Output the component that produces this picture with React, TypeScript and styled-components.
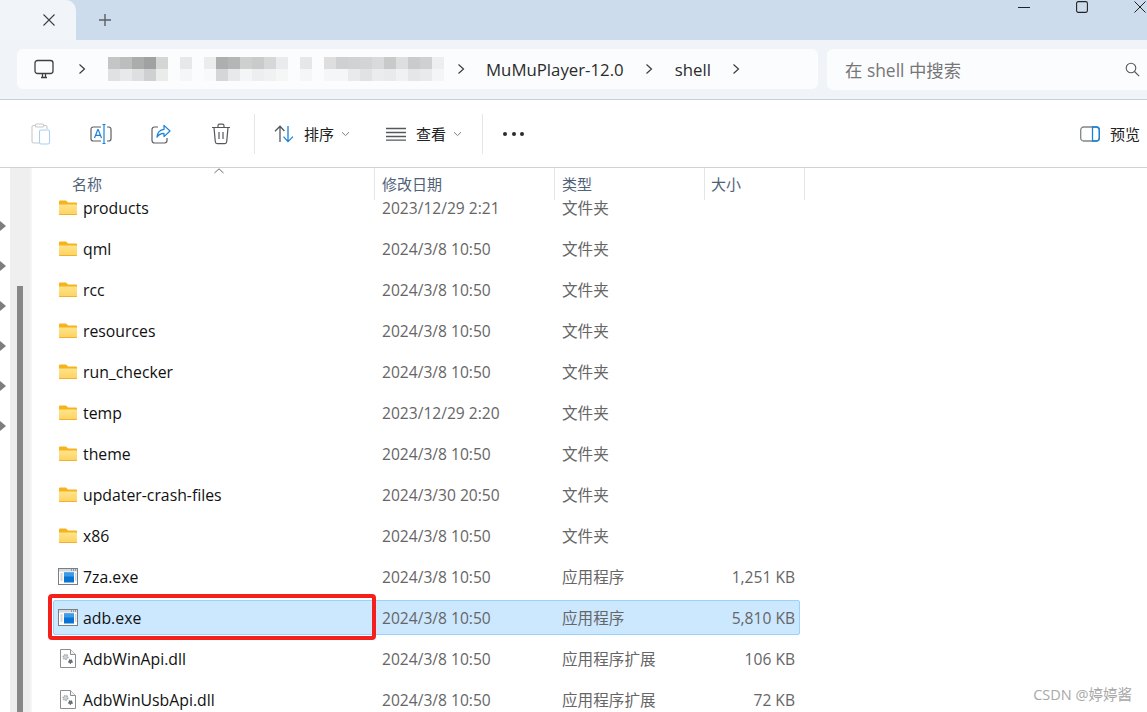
import React from 'react'
import styled, {createGlobalStyle} from 'styled-components'

const FONT = `"Open Sans", "Noto Sans CJK SC", sans-serif`

const GlobalStyle = createGlobalStyle`
  html, body {
    margin: 0;
    padding: 0;
    height: 712px;
    overflow: hidden;
    background: #fff;
    font-family: ${FONT};
  }
`

type FileKind = 'folder' | 'exe' | 'dll'

interface FileRow {
  name: string
  date: string
  type: string
  size?: string
  kind: FileKind
  selected?: boolean
}

const FILES: FileRow[] = [
  {name: 'products', date: '2023/12/29 2:21', type: '文件夹', kind: 'folder'},
  {name: 'qml', date: '2024/3/8 10:50', type: '文件夹', kind: 'folder'},
  {name: 'rcc', date: '2024/3/8 10:50', type: '文件夹', kind: 'folder'},
  {name: 'resources', date: '2024/3/8 10:50', type: '文件夹', kind: 'folder'},
  {name: 'run_checker', date: '2024/3/8 10:50', type: '文件夹', kind: 'folder'},
  {name: 'temp', date: '2023/12/29 2:20', type: '文件夹', kind: 'folder'},
  {name: 'theme', date: '2024/3/8 10:50', type: '文件夹', kind: 'folder'},
  {name: 'updater-crash-files', date: '2024/3/30 20:50', type: '文件夹', kind: 'folder'},
  {name: 'x86', date: '2024/3/8 10:50', type: '文件夹', kind: 'folder'},
  {name: '7za.exe', date: '2024/3/8 10:50', type: '应用程序', size: '1,251 KB', kind: 'exe'},
  {name: 'adb.exe', date: '2024/3/8 10:50', type: '应用程序', size: '5,810 KB', kind: 'exe', selected: true},
  {name: 'AdbWinApi.dll', date: '2024/3/8 10:50', type: '应用程序扩展', size: '106 KB', kind: 'dll'},
  {name: 'AdbWinUsbApi.dll', date: '2024/3/8 10:50', type: '应用程序扩展', size: '72 KB', kind: 'dll'},
]

// the blurred part of the path, two rows of 12px blocks ('' = nothing)
const MOSAIC = [
  ['#c4c5c6', '#bcbdbd', '#abacac', '#a0a1a1', '#d4d5d5', '', '#e7e8e9', '', '#ebecec', '#adaeae', '#b4b5b5', '#ccd0cf', '#c9cbcb', '#d5d7d8', '#e9ebec', '', '#e6e7e8', '', '#dededf', '#cfd0d1', '#d0d2d3', '#d2d5d7', '#d8dadb', '#c8c9c9', '#dcdedf', '#c9cbcc', '#cfd0d1', '#eceef0'],
  ['#e0e1e2', '#e8e9ea', '#dedfe0', '#cfd0d1', '#ebebe9', '', '#f5f6f7', '', '#f8f9fa', '#d5d6d6', '#e8e9ea', '#f4f5f6', '#edeef0', '#f0f2f2', '#f6f6f7', '', '#f5f6f7', '', '#f5f6f7', '#f5f6f7', '#e8eaec', '#e0e2e4', '#eaecee', '#e8eaec', '#f0f1f3', '#e5e6e8', '#e9eaec', '#f4f5f7'],
]

function FileIcon({kind}: {kind: FileKind}): React.JSX.Element {
  if (kind === 'folder') {
    return (
      <svg width='20' height='18' viewBox='0 0 20 18'>
        <defs>
          <linearGradient id='folderBody' x1='0' y1='0' x2='0' y2='1'>
            <stop offset='0' stopColor='#ffe48c' />
            <stop offset='1' stopColor='#fdd25f' />
          </linearGradient>
        </defs>
        <path d='M1 2.5a1 1 0 0 1 1-1h6l2 2h8a1 1 0 0 1 1 1V8H1z' fill='#f6b31c' />
        <path d='M1 5.5h17a1 1 0 0 1 1 1v8.5a1 1 0 0 1-1 1H2a1 1 0 0 1-1-1z' fill='url(#folderBody)' />
        <path d='M1 15h18v.2a.8.8 0 0 1-.8.8H1.8a.8.8 0 0 1-.8-.8z' fill='#f1b02e' />
      </svg>
    )
  }
  if (kind === 'exe') {
    return (
      <svg width='20' height='18' viewBox='0 0 20 18'>
        <rect x='.5' y='.5' width='19' height='16' fill='#fff' stroke='#7a7f84' />
        <rect x='1' y='1' width='18' height='2.5' fill='#d4d9de' />
        <path d='M13 2h1M15 2h1M17 2h1' stroke='#555' />
        <rect x='6' y='4.5' width='10' height='10' fill='#0a74d0' />
        <rect x='6' y='4.5' width='10' height='4' fill='#3b9be8' />
        <path d='M2.5 6h2M2.5 8h2M2.5 10h2M2.5 12h2M17 6h1.5M17 8h1.5M17 10h1.5M17 12h1.5' stroke='#a9b0b6' />
      </svg>
    )
  }
  return (
    <svg width='20' height='19' viewBox='0 0 20 19'>
      <path d='M2.5.5h10l5 5v13h-15z' fill='#fff' stroke='#8b8f93' />
      <path d='M12.5.5v5h5' fill='#f2f2f2' stroke='#8b8f93' />
      <circle cx='7.5' cy='8' r='2.4' fill='#cdd2d6' stroke='#a5abb0' strokeDasharray='1.4 .8' strokeWidth='1.4' />
      <circle cx='12.5' cy='12.5' r='1.7' fill='#6e7478' stroke='#5b6165' strokeDasharray='1.2 .7' strokeWidth='1.2' />
    </svg>
  )
}

function Chevron(): React.JSX.Element {
  return (
    <svg width='8' height='12' viewBox='0 0 8 12' fill='none' stroke='#3a3d40' strokeWidth='1.2'>
      <path d='M1.5 1.5 6.5 6l-5 4.5' />
    </svg>
  )
}

function SmallCaret(): React.JSX.Element {
  return (
    <svg width='9' height='6' viewBox='0 0 9 6' fill='none' stroke='#7c7f83' strokeWidth='1'>
      <path d='M1 1.2 4.5 4.6 8 1.2' />
    </svg>
  )
}

export default function App(): React.JSX.Element {
  return (
    <Window>
      <GlobalStyle />

      <TitleBar>
        <Tab>
          <svg width='14' height='14' viewBox='0 0 14 14' stroke='#3d4043' strokeWidth='1.1'>
            <path d='M1.5 1.5l11 11M12.5 1.5l-11 11' />
          </svg>
        </Tab>
        <NewTab>
          <svg width='14' height='14' viewBox='0 0 14 14' stroke='#5a5e62' strokeWidth='1.4'>
            <path d='M7 1v12M1 7h12' />
          </svg>
        </NewTab>
        <WindowControls>
          <WindowButton>
            <svg width='12' height='12' viewBox='0 0 12 12' stroke='#222' strokeWidth='1'>
              <path d='M0 6.5h12' />
            </svg>
          </WindowButton>
          <WindowButton>
            <svg width='12' height='12' viewBox='0 0 12 12' fill='none' stroke='#222' strokeWidth='1.1'>
              <rect x='.6' y='.6' width='10.8' height='10.8' rx='1.6' />
            </svg>
          </WindowButton>
          <WindowButton>
            <svg width='12' height='12' viewBox='0 0 12 12' stroke='#222' strokeWidth='1'>
              <path d='M.5.5l11 11M11.5.5l-11 11' />
            </svg>
          </WindowButton>
        </WindowControls>
      </TitleBar>

      <AddressRow>
        <Breadcrumb>
          <PcIcon>
            <svg width='20' height='20' viewBox='0 0 20 20' fill='none' stroke='#3e4144' strokeWidth='1.3'>
              <rect x='1' y='1.5' width='18' height='13' rx='2.5' />
              <path d='M7 18.5h6M8.5 15v3M11.5 15v3' />
            </svg>
          </PcIcon>
          <CrumbSep $left={24}>
            <Chevron />
          </CrumbSep>
          <Mosaic>
            {MOSAIC.flat().map((color, i) => (
              <MosaicCell key={i} $color={color} />
            ))}
          </Mosaic>
          <CrumbSep $left={13}>
            <Chevron />
          </CrumbSep>
          <Crumb>MuMuPlayer-12.0</Crumb>
          <CrumbSep>
            <Chevron />
          </CrumbSep>
          <Crumb>shell</Crumb>
          <CrumbSep>
            <Chevron />
          </CrumbSep>
        </Breadcrumb>
        <SearchBox>
          <SearchText>在 shell 中搜索</SearchText>
          <svg width='15' height='15' viewBox='0 0 15 15' fill='none' stroke='#55585b' strokeWidth='1.1'>
            <circle cx='6' cy='6' r='4.8' />
            <path d='M9.5 9.5l4.6 4.6' />
          </svg>
        </SearchBox>
      </AddressRow>

      <Toolbar>
        <ToolIcon>
          <svg width='20' height='22' viewBox='0 0 20 22' fill='none' strokeWidth='1.1'>
            <path d='M4 2.5H2.6A1.6 1.6 0 0 0 1 4.1v14.3A1.6 1.6 0 0 0 2.6 20H8' stroke='#c9c9c9' />
            <path d='M13 2.5h1.4A1.6 1.6 0 0 1 16 4.1V6' stroke='#c9c9c9' />
            <rect x='4.5' y='1' width='8' height='3' rx='1' stroke='#c9c9c9' />
            <rect x='8.5' y='7' width='10' height='14' rx='1.6' stroke='#a5d1f5' />
          </svg>
        </ToolIcon>
        <ToolIcon>
          <svg width='22' height='22' viewBox='0 0 22 22' fill='none' strokeWidth='1.2'>
            <path d='M11 4H3.2A2.2 2.2 0 0 0 1 6.2v9.6A2.2 2.2 0 0 0 3.2 18H11M17 4h1.8A2.2 2.2 0 0 1 21 6.2v9.6a2.2 2.2 0 0 1-2.2 2.2H17' stroke='#5c5f62' />
            <path d='M12.5 1.5h3M14 1.5v19M12.5 20.5h3' stroke='#1682dc' />
            <path d='M4.5 15 7.8 6.5h.4L11.5 15M5.6 12.4h4.8' stroke='#1682dc' />
          </svg>
        </ToolIcon>
        <ToolIcon>
          <svg width='20' height='20' viewBox='0 0 20 20' fill='none' strokeWidth='1.2'>
            <path d='M7 3H3.4A2.4 2.4 0 0 0 1 5.4v11.2A2.4 2.4 0 0 0 3.4 19h10.2a2.4 2.4 0 0 0 2.4-2.4V14' stroke='#5c5f62' />
            <path d='M13 1.4 19 7l-6 5.6V9.3c-3.2 0-5.4 1.2-7 3.9.4-4.4 3-7.4 7-7.8z' stroke='#1682dc' strokeLinejoin='round' />
          </svg>
        </ToolIcon>
        <ToolIcon>
          <svg width='20' height='22' viewBox='0 0 20 22' fill='none' stroke='#55585b' strokeWidth='1.2'>
            <path d='M1 4.5h18M7 4.5V2.8A1.6 1.6 0 0 1 8.6 1.2h2.8A1.6 1.6 0 0 1 13 2.8v1.7' />
            <path d='M3 4.5l1.3 14.3A2 2 0 0 0 6.3 20.6h7.4a2 2 0 0 0 2-1.8L17 4.5' />
            <path d='M8 9v7M12 9v7' />
          </svg>
        </ToolIcon>
        <ToolDivider />
        <MenuButton>
          <svg width='20' height='18' viewBox='0 0 20 18' fill='none' strokeWidth='1.3'>
            <path d='M6 17V1.5M1 6.2l5-5 4.4 4.8' stroke='#55585b' />
            <path d='M14 1v15.5M9.5 11.6l4.5 5 5-5' stroke='#1682dc' />
          </svg>
          <MenuLabel>排序</MenuLabel>
          <SmallCaret />
        </MenuButton>
        <MenuButton>
          <svg width='20' height='14' viewBox='0 0 20 14' stroke='#55585b' strokeWidth='1.3'>
            <path d='M0 1.5h20M0 5.5h20M0 9.5h20M0 13.2h20' />
          </svg>
          <MenuLabel>查看</MenuLabel>
          <SmallCaret />
        </MenuButton>
        <ToolDivider />
        <MoreDots>
          <Dot />
          <Dot />
          <Dot />
        </MoreDots>
        <Preview>
          <svg width='20' height='16' viewBox='0 0 20 16' fill='none' strokeWidth='1.3'>
            <rect x='.7' y='1' width='18.6' height='14' rx='3' stroke='#7f8589' />
            <path d='M12.5 1h4a3 3 0 0 1 2.8 3v8a3 3 0 0 1-2.8 3h-4z' stroke='#1682dc' />
          </svg>
          <MenuLabel>预览</MenuLabel>
        </Preview>
      </Toolbar>

      <Body>
        <TreeGutter>
          {[0, 1, 2, 3, 4, 5].map(i => (
            <TreeArrow key={i} />
          ))}
        </TreeGutter>
        <ScrollTrack>
          <ScrollThumb />
        </ScrollTrack>
        <Pane>
          <ColumnHeader>
            <HeaderCell $width={342} $pad={40}>
              名称
              <SortCaret>
                <svg width='10' height='6' viewBox='0 0 10 6' fill='none' stroke='#6b6f73' strokeWidth='1'>
                  <path d='M.5 5 5 .8 9.5 5' />
                </svg>
              </SortCaret>
            </HeaderCell>
            <HeaderCell $width={180} $pad={7} $line>
              修改日期
            </HeaderCell>
            <HeaderCell $width={150} $pad={7} $line>
              类型
            </HeaderCell>
            <HeaderCell $width={101} $pad={6} $line $closed>
              大小
            </HeaderCell>
          </ColumnHeader>

          <FileList>
            {FILES.map(file => (
              <Row key={file.name} $selected={file.selected}>
                <NameCell>
                  <IconSlot>
                    <FileIcon kind={file.kind} />
                  </IconSlot>
                  {file.name}
                </NameCell>
                <MutedCell>{file.date}</MutedCell>
                <MutedCell>{file.type}</MutedCell>
                <SizeCell>{file.size}</SizeCell>
              </Row>
            ))}
            <RedMark />
          </FileList>
        </Pane>
      </Body>

      <Watermark>CSDN @婷婷酱</Watermark>
    </Window>
  )
}

const Window = styled.div`
  position: relative;
  width: 1147px;
  height: 712px;
  overflow: hidden;
  display: flex;
  flex-direction: column;
  background: #fff;
  color: #1a1a1a;
`

const TitleBar = styled.header`
  height: 40px;
  flex: none;
  display: flex;
  background: #cddcec;
`

const Tab = styled.div`
  width: 76px;
  box-sizing: border-box;
  padding: 0 20px 0 0;
  display: flex;
  align-items: center;
  justify-content: flex-end;
  background: #f1f5f9;
  border-radius: 0 10px 0 0;
`

const NewTab = styled.div`
  width: 58px;
  display: flex;
  align-items: center;
  justify-content: center;
`

const WindowControls = styled.div`
  margin-left: auto;
  margin-right: -22px;
  display: flex;
  align-items: flex-start;
`

const WindowButton = styled.div`
  width: 58px;
  height: 14px;
  display: flex;
  align-items: center;
  justify-content: center;
`

const AddressRow = styled.div`
  flex: none;
  padding: 9px 0 0 17px;
  height: 50px;
  display: flex;
  gap: 9px;
  background: #f0f4f9;
  border-bottom: 1px solid #c3cfdc;
`

const Breadcrumb = styled.nav`
  width: 801px;
  height: 40px;
  box-sizing: border-box;
  padding-left: 17px;
  display: flex;
  align-items: center;
  background: #fbfcfe;
  border-radius: 6px;
`

const PcIcon = styled.span`
  width: 20px;
  display: flex;
`

const CrumbSep = styled.span<{$left?: number}>`
  width: 8px;
  margin: 0 21.5px 0 ${p => p.$left ?? 21.5}px;
  display: flex;
`

const Mosaic = styled.div`
  display: grid;
  grid-template-columns: repeat(28, 12px);
  grid-auto-rows: 12px;
`

const MosaicCell = styled.i<{$color: string}>`
  background: ${p => p.$color || 'transparent'};
`

const Crumb = styled.span`
  font-size: 16.8px;
  color: #2b2b2b;
  white-space: nowrap;
`

const SearchBox = styled.div`
  flex: 1;
  height: 41px;
  box-sizing: border-box;
  padding: 0 7px 0 18px;
  display: flex;
  align-items: center;
  justify-content: space-between;
  background: #fbfcfe;
  border-radius: 6px 0 0 6px;
`

const SearchText = styled.span`
  font-size: 17.4px;
  color: #767676;
`

const Toolbar = styled.div`
  height: 67px;
  flex: none;
  padding-left: 11px;
  display: flex;
  align-items: center;
  background: #fff;
  border-bottom: 1px solid #cfd3d7;
`

const ToolIcon = styled.div`
  width: 60px;
  display: flex;
  justify-content: center;
`

const ToolDivider = styled.div`
  width: 1px;
  height: 40px;
  margin-left: 3px;
  background: #e4e6e8;
`

const MenuButton = styled.div`
  width: 112px;
  box-sizing: border-box;
  padding-left: 19px;
  display: flex;
  align-items: center;
`

const MenuLabel = styled.span`
  margin: 0 7px 0 10px;
  font-size: 15px;
  color: #222;
`

const MoreDots = styled.div`
  margin-left: 20px;
  display: flex;
  gap: 4.5px;
`

const Dot = styled.span`
  width: 4px;
  height: 4px;
  border-radius: 50%;
  background: #2b2b2b;
`

const Preview = styled.div`
  margin-left: auto;
  display: flex;
  align-items: center;
`

const Body = styled.main`
  flex: 1;
  min-height: 0;
  display: flex;
`

const TreeGutter = styled.div`
  width: 10px;
  flex: none;
  box-sizing: border-box;
  padding-top: 53px;
  display: flex;
  flex-direction: column;
  gap: 30px;
`

const TreeArrow = styled.span`
  width: 0;
  height: 0;
  border-left: 6px solid #7d7d7d;
  border-top: 5px solid transparent;
  border-bottom: 5px solid transparent;
`

const ScrollTrack = styled.div`
  width: 20px;
  flex: none;
  box-sizing: border-box;
  padding: 118px 7px 0;
  background: #efefef;
`

const ScrollThumb = styled.div`
  height: 100%;
  background: #888;
`

const Pane = styled.section`
  flex: 1;
  min-width: 0;
  border-left: 2px solid #f5f5f5;
`

const ColumnHeader = styled.div`
  position: relative;
  z-index: 1;
  height: 32px;
  display: flex;
  background: #fff;
`

const HeaderCell = styled.div<{$width: number; $pad: number; $line?: boolean; $closed?: boolean}>`
  position: relative;
  width: ${p => p.$width}px;
  box-sizing: border-box;
  padding: 7px 0 0 ${p => p.$pad}px;
  font-size: 15px;
  line-height: 18px;
  color: #4f6278;
  ${p => (p.$line ? 'border-left: 1px solid #e3e5e7;' : '')}
  ${p => (p.$closed ? 'border-right: 1px solid #e3e5e7;' : '')}
`

const SortCaret = styled.span`
  position: absolute;
  left: 182px;
  top: 0;
  display: flex;
`

const FileList = styled.div`
  position: relative;
  margin: -10px 0 0 21px;
  width: 747px;
  display: flex;
  flex-direction: column;
  gap: 6px;
`

const Row = styled.div<{$selected?: boolean}>`
  height: 35px;
  flex: none;
  box-sizing: border-box;
  padding: 0 4px 0 4px;
  display: grid;
  grid-template-columns: 324px 180px 1fr 100px;
  align-items: center;
  border: 1px solid ${p => (p.$selected ? '#99d1ff' : 'transparent')};
  background: ${p => (p.$selected ? '#cce8ff' : 'transparent')};
  border-radius: 2px;
`

const NameCell = styled.div`
  display: flex;
  align-items: center;
  font-size: 15.8px;
  color: #111;
  white-space: nowrap;
`

const IconSlot = styled.span`
  width: 25px;
  flex: none;
  display: flex;
`

const MutedCell = styled.div`
  font-size: 15.6px;
  color: #666;
  white-space: nowrap;
`

const SizeCell = styled(MutedCell)`
  text-align: right;
`

const RedMark = styled.div`
  position: absolute;
  left: -5px;
  top: 404px;
  width: 328px;
  height: 46px;
  box-sizing: border-box;
  border: 4px solid #f5201b;
  border-radius: 4px;
`

const Watermark = styled.div`
  position: absolute;
  right: 15px;
  bottom: 8px;
  font-size: 14.5px;
  color: #a8a8a8;
  z-index: 2;
`
